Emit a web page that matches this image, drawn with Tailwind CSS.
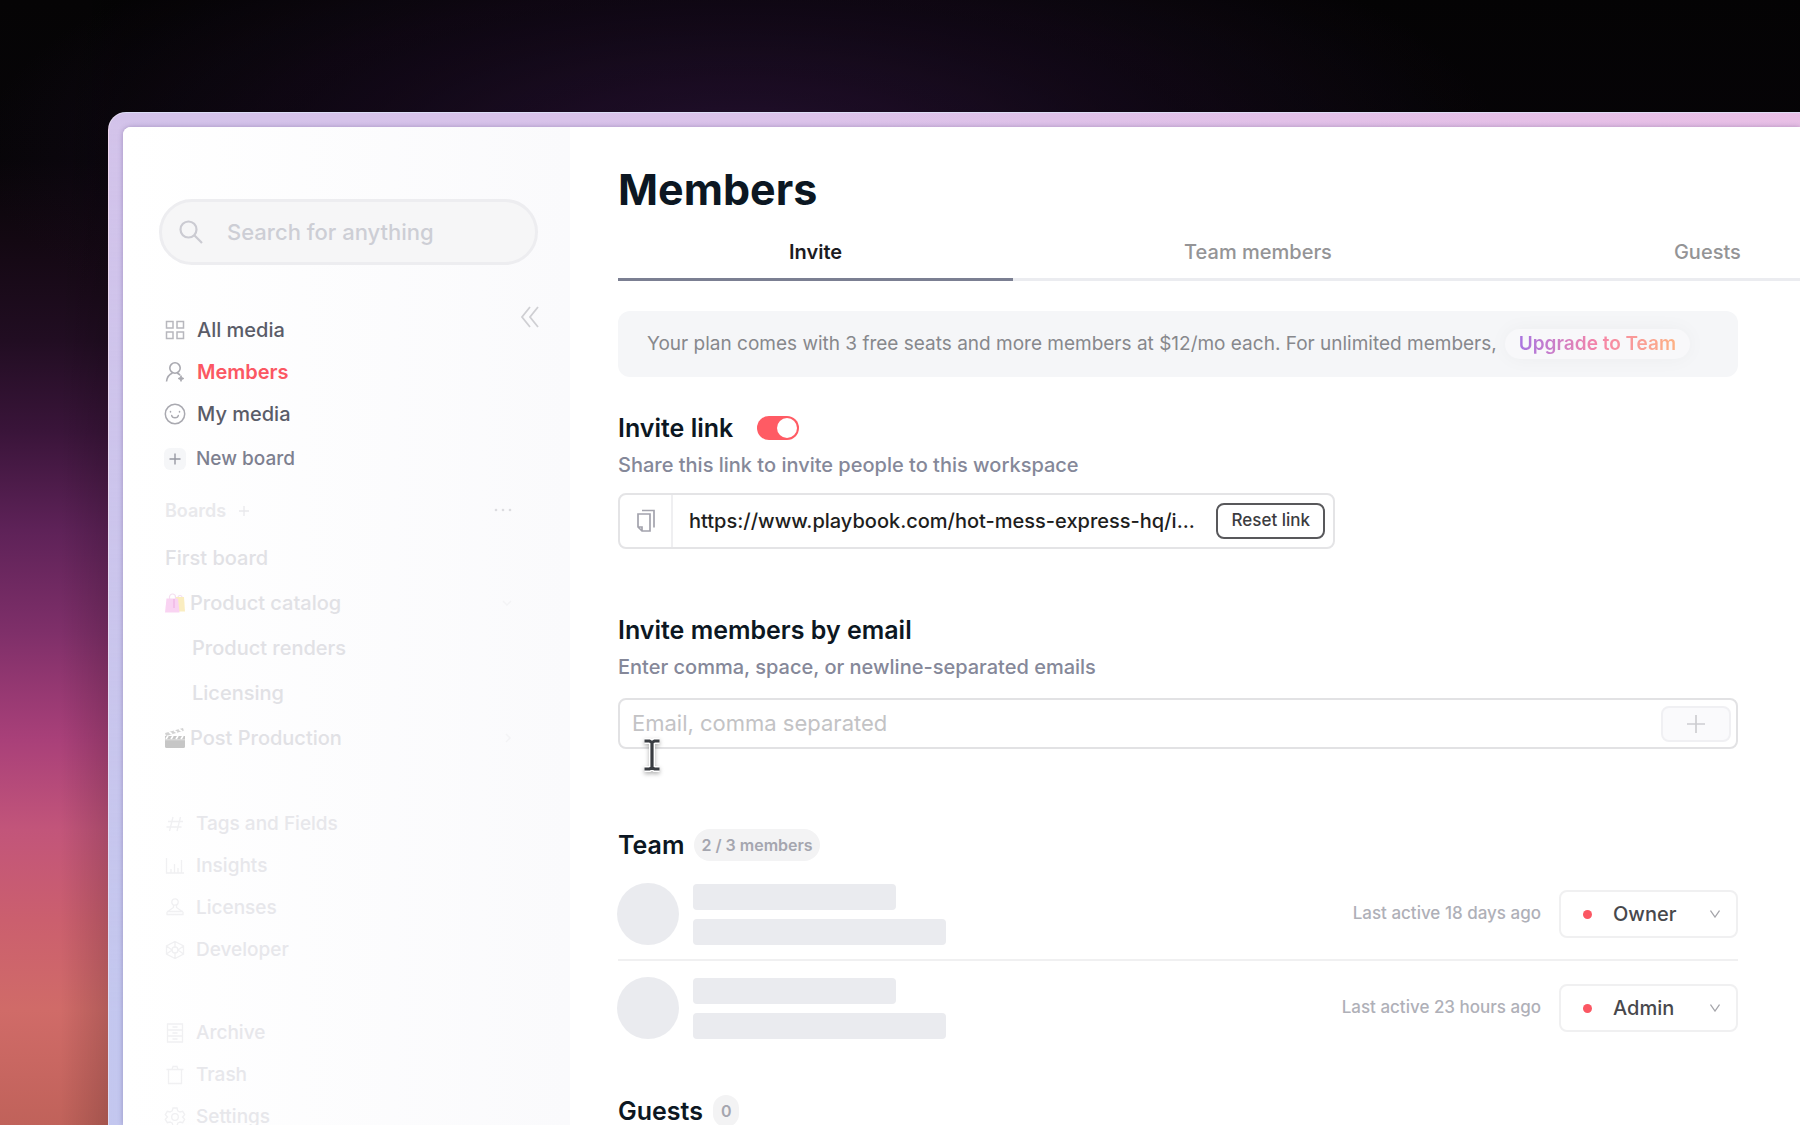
<!DOCTYPE html>
<html lang="en">
<head>
    <meta charset="UTF-8">
    <meta name="viewport" content="width=device-width, initial-scale=1.0">
    <title>Members</title>
    <script src="https://cdn.jsdelivr.net/npm/@tailwindcss/browser@4"></script>
    <style>
        body {
            font-family: 'Inter', 'Liberation Sans', sans-serif;
            background:
                linear-gradient(to right, transparent 60px, rgba(0, 0, 0, 0.2) 125px),
                radial-gradient(760px 260px at 740px 150px, #2b1338 0%, rgba(30, 13, 40, 0.65) 50%, transparent 100%),
                linear-gradient(to bottom, #050405 0, #070508 160px, #130812 240px, #210d22 340px, #391439 430px, #5e2258 530px, #7e2f69 630px, #a94079 740px, #c2557a 830px, #cb5f6e 920px, #d06b68 1010px, #c0625a 1125px);
        }
    </style>
</head>
<body class="h-screen overflow-hidden pl-[108px] pt-28">
    <!-- App window, runs off the right and bottom edges -->
    <div class="h-full rounded-tl-[18px] border-l border-t border-white/40 bg-[linear-gradient(to_bottom,rgba(190,200,240,0)_0,rgba(190,200,240,0.75)_900px),linear-gradient(to_right,#d3c3ea_0,#dcc3ea_700px,#e9bfe6_1700px)] pl-3.5 pt-3.5">
        <div class="flex h-full overflow-hidden rounded-tl-lg bg-white shadow-[0_0_5px_rgba(70,50,110,0.35)]">

            <!-- Sidebar -->
            <aside class="w-[447px] shrink-0 bg-linear-to-r from-white to-[#fafafc] pl-9 pr-8 pt-[72px]">
                <label class="flex h-[66px] items-center gap-6 rounded-full border-3 border-[#ededf0] bg-[#f6f6f7] pl-[17px] pr-6">
                    <svg class="size-6 shrink-0 text-[#cbcbd2]" viewBox="0 0 24 24" fill="none" stroke="currentColor" stroke-width="2.200">
                        <circle cx="9.500" cy="9.500" r="8" />
                        <path d="M15.300 15.300 23 23" />
                    </svg>
                    <input type="search" aria-label="Search" placeholder="Search for anything" class="w-full min-w-0 bg-transparent text-[22px] font-medium outline-none placeholder:text-[#cdced5]">
                </label>

                <div class="-mr-0.5 mt-10 flex justify-end">
                    <button type="button" aria-label="Collapse sidebar" class="text-[#cfcfd3]">
                        <svg class="h-6 w-5" viewBox="0 0 20 24" fill="none" stroke="currentColor" stroke-width="1.800">
                            <path d="M10 2 2 12l8 10M18 2l-8 10 8 10" />
                        </svg>
                    </button>
                </div>

                <nav class="-mt-5 ml-[5px] flex flex-col text-xl font-medium text-[#5a5c68]">
                    <a href="#" class="flex h-[42px] items-center gap-[11px]">
                        <svg class="size-[22px] text-[#b7b7bd]" viewBox="0 0 22 22" fill="none" stroke="currentColor" stroke-width="1.500">
                            <path d="M2.500 2.500h6.500v6.500h-6.500zM13 2.500h6.500v6.500h-6.500zM2.500 13h6.500v6.500h-6.500zM13 13h6.500v6.500h-6.500z" />
                        </svg>
                        All media
                    </a>
                    <a href="#" class="flex h-[42px] items-center gap-[11px] font-semibold text-[#fb5763]">
                        <svg class="size-[22px] text-[#a9a9b0]" viewBox="0 0 22 22" fill="none" stroke="currentColor" stroke-width="1.600">
                            <circle cx="11" cy="7" r="5.200" />
                            <path d="M2.500 20.500c.5-4.300 3-7.300 6-8.500M13 12c1.300.5 2.400 1.300 3.200 2.400" />
                            <path d="m17 14.500.9 2.100 2.100.9-2.100.9-.9 2.100-.9-2.100-2.100-.9 2.100-.9z" fill="currentColor" stroke-width="0.800" />
                        </svg>
                        Members
                    </a>
                    <a href="#" class="flex h-[42px] items-center gap-[11px]">
                        <svg class="size-[22px] text-[#a9a9b0]" viewBox="0 0 22 22" fill="none" stroke="currentColor" stroke-width="1.500">
                            <circle cx="11" cy="11" r="9.700" />
                            <path d="M7.700 12.500c.5 3 6.100 3 6.600 0M6.500 8.500v.6M15.500 8.500v.6" stroke-linecap="round" />
                        </svg>
                        My media
                    </a>
                    <a href="#" class="mt-[3px] flex h-[42px] items-center gap-2.5 text-[19px] text-[#7d8090]">
                        <svg class="size-[22px] rounded-md bg-[#f5f6f8] text-[#9799a3]" viewBox="0 0 22 22" fill="none" stroke="currentColor" stroke-width="1.400">
                            <path d="M11 5.500v11M5.500 11h11" />
                        </svg>
                        New board
                    </a>
                </nav>

                <!-- Boards -->
                <div class="ml-1.5 mt-[18px] flex h-[26px] items-center pr-[26px] text-[#e9e9ec]">
                    <h2 class="text-lg font-semibold">Boards</h2>
                    <button type="button" aria-label="Add board" class="ml-3">
                        <svg class="size-3" viewBox="0 0 12 12" fill="none" stroke="currentColor" stroke-width="1.300"><path d="M6 1v10M1 6h10" /></svg>
                    </button>
                    <button type="button" aria-label="Board options" class="ml-auto text-[#dcdce0]">
                        <svg class="h-3 w-[18px]" viewBox="0 0 18 12" fill="currentColor"><circle cx="2" cy="5" r="1.300" /><circle cx="9" cy="5" r="1.300" /><circle cx="16" cy="5" r="1.300" /></svg>
                    </button>
                </div>
                <ul class="ml-1.5 mt-[11px] flex flex-col pr-[26px] text-xl font-medium text-[#e1e1e5]">
                    <li class="flex h-[45px] items-center"><a href="#">First board</a></li>
                    <li class="flex h-[45px] items-center gap-[5px]">
                        <svg class="size-5" viewBox="0 0 20 20">
                            <path d="M13 7V4.500a2 2 0 0 1 4 0V7M4.500 6V4a3 3 0 0 1 6 0v2" fill="none" stroke="#f4dff0" stroke-width="1.200" />
                            <path d="M11 4h8l1 14.500h-8z" fill="#faedc0" />
                            <path d="M1.500 5.500h11.500l1.500 14H0z" fill="#f9d3f2" />
                            <path d="M9 6v9" stroke="#f0b8e6" stroke-width="1.500" />
                        </svg>
                        <a href="#">Product catalog</a>
                        <svg class="ml-auto h-2 w-2.5 text-[#f3f3f5]" viewBox="0 0 10 8" fill="none" stroke="currentColor" stroke-width="1.500"><path d="m1 2 4 4 4-4" /></svg>
                    </li>
                    <li class="flex h-[45px] items-center pl-[27px]"><a href="#">Product renders</a></li>
                    <li class="flex h-[45px] items-center pl-[27px]"><a href="#">Licensing</a></li>
                    <li class="flex h-[45px] items-center gap-[5px]">
                        <svg class="size-5" viewBox="0 0 20 20">
                            <path d="M0 8h20v10.500q0 1.500-1.500 1.500h-17Q0 20 0 18.500z" fill="#c6c6c6" />
                            <path d="m0 5 18-5 .8 2.800L1 8z" fill="#d2d2d2" />
                            <path d="m4 4 3 2M9 2.500l3 2M14 1.200l3 2M3 8l-2 3M8 8l-2 3M13 8l-2 3M18 8l-2 3" stroke="#fff" stroke-width="1.700" />
                            <path d="M0 11.800h20" stroke="#e2e2e2" />
                        </svg>
                        <a href="#">Post Production</a>
                        <svg class="ml-auto h-2.5 w-2 text-[#f3f3f5]" viewBox="0 0 8 10" fill="none" stroke="currentColor" stroke-width="1.500"><path d="m2 1 4 4-4 4" /></svg>
                    </li>
                </ul>

                <nav class="ml-[5px] mt-[43px] flex flex-col text-[19px] font-medium text-[#e7e7eb]">
                    <a href="#" class="flex h-[42px] items-center gap-2.5">
                        <svg class="size-[22px] text-[#f0f0f2]" viewBox="0 0 22 22" fill="none" stroke="currentColor" stroke-width="1.300"><path d="M9 4 5.500 18M16.500 4 13 18M4 8.500h15M2.500 14h15" /></svg>
                        Tags and Fields
                    </a>
                    <a href="#" class="flex h-[42px] items-center gap-2.5">
                        <svg class="size-[22px] text-[#f0f0f2]" viewBox="0 0 22 22" fill="none" stroke="currentColor" stroke-width="1.300"><path d="M2.500 3v15H20M7 18v-4M10.500 18V9M14 18v-5M17.500 18V5" /></svg>
                        Insights
                    </a>
                    <a href="#" class="flex h-[42px] items-center gap-2.5">
                        <svg class="size-[22px] text-[#f0f0f2]" viewBox="0 0 22 22" fill="none" stroke="currentColor" stroke-width="1.300"><circle cx="11" cy="5" r="3.200" /><path d="M9.500 8v2.500L3 15v2.500h16V15l-6.500-4.500V8M3 14.500h16" /></svg>
                        Licenses
                    </a>
                    <a href="#" class="flex h-[42px] items-center gap-2.5">
                        <svg class="size-[22px] text-[#f0f0f2]" viewBox="0 0 22 22" fill="none" stroke="currentColor" stroke-width="1.300"><path d="m11 2.500 8.500 4.500v8L11 19.500 2.500 15V7zM11 2.500V8M11 14v5.500M2.500 7 8 11l-5.500 4M19.500 7 14 11l5.500 4" /><circle cx="11" cy="11" r="3" /></svg>
                        Developer
                    </a>
                    <a href="#" class="mt-[41px] flex h-[42px] items-center gap-2.5">
                        <svg class="size-[22px] text-[#f0f0f2]" viewBox="0 0 22 22" fill="none" stroke="currentColor" stroke-width="1.300"><path d="M3.500 2h15v18h-15zM3.500 8h15M3.500 14h15M8.500 5h5M8.500 11h5M8.500 17h5" /></svg>
                        Archive
                    </a>
                    <a href="#" class="flex h-[42px] items-center gap-2.5">
                        <svg class="size-[22px] text-[#f0f0f2]" viewBox="0 0 22 22" fill="none" stroke="currentColor" stroke-width="1.300"><path d="M2.500 5.500h17M4.500 5.500V19.500h13V5.500M8 5.500 9 2.500h4l1 3" /></svg>
                        Trash
                    </a>
                    <a href="#" class="flex h-[42px] items-center gap-2.5">
                        <svg class="size-[22px] text-[#f0f0f2]" viewBox="0 0 22 22" fill="none" stroke="currentColor" stroke-width="1.300"><path d="M9 2h4l.7 2.700 2.300 1.300 2.700-.7 2 3.400L18.500 11l2.200 2.300-2 3.400-2.700-.7-2.300 1.300L13 20H9l-.7-2.700L6 16l-2.700.7-2-3.400L3.500 11 1.300 8.700l2-3.400L6 6l2.300-1.300z" /><circle cx="11" cy="11" r="3.300" /></svg>
                        Settings
                    </a>
                </nav>
            </aside>

            <!-- Members page -->
            <main class="min-w-0 flex-1 pl-12 pr-[62px] pt-9 text-xl font-medium text-[#0c1722]">
                <h1 class="text-[43px]/[52px] font-bold">Members</h1>

                <div class="-mr-[62px] overflow-hidden">
                    <div role="tablist" class="flex w-max text-[#949496]">
                        <button type="button" role="tab" aria-selected="true" class="border-b-3 border-[#7b7f92] px-[171px] pb-3.5 pt-[25px] text-xl/6 font-semibold text-[#1c1c1f]">Invite</button>
                        <button type="button" role="tab" class="border-b-3 border-[#ebecf0] px-[171px] pb-3.5 pt-[25px] text-xl/6">Team members</button>
                        <button type="button" role="tab" class="border-b-3 border-[#ebecf0] px-[171px] pb-3.5 pt-[25px] text-xl/6">Guests</button>
                    </div>
                </div>

                <div class="mt-[30px] flex h-[66px] items-center gap-2 rounded-xl bg-[#f5f6f8] pl-[29px] text-[19px] whitespace-nowrap text-[#87888c]">
                    <p class="font-normal">Your plan comes with 3 free seats and more members at $12/mo each. For unlimited members,</p>
                    <a href="#" class="rounded-full bg-[#f8f8fa] px-3.5 py-0.5 font-semibold shadow-[0_0_20px_rgba(0,0,0,0.04)]">
                        <span class="bg-linear-to-r from-[#a974e0] via-[#f584a8] to-[#fdb183] bg-clip-text text-transparent">Upgrade to Team</span>
                    </a>
                </div>

                <section class="mt-[35px]">
                    <div class="flex h-8 items-center gap-6">
                        <h2 id="invite-link" class="text-[25px] font-semibold">Invite link</h2>
                        <label class="flex h-6 w-[42px] rounded-full bg-[#ff5b64] p-0.5">
                            <input type="checkbox" checked aria-labelledby="invite-link" class="peer sr-only">
                            <span class="size-5 rounded-full bg-white peer-checked:ml-auto"></span>
                        </label>
                    </div>
                    <p class="mt-[7px] text-[#858899]">Share this link to invite people to this workspace</p>
                    <div class="mt-3.5 flex h-14 w-[717px] items-center rounded-lg border-2 border-[#e4e4e6] pr-2">
                        <button type="button" aria-label="Copy link" class="flex h-full w-[53px] items-center justify-center border-r-2 border-[#efeff1] text-[#a3a3ad]">
                            <svg class="h-6 w-5" viewBox="0 0 20 24" fill="none" stroke="currentColor" stroke-width="1.700">
                                <path d="M6 1.500h12v17M14 5v17H6L2 18V5zM2 18h4v4" />
                            </svg>
                        </button>
                        <input type="text" readonly aria-label="Invite link" value="https://www.playbook.com/hot-mess-express-hq/i..." class="ml-4 min-w-0 flex-1 bg-transparent text-[#1e1e20] outline-none">
                        <button type="button" class="h-9 rounded-lg border-2 border-[#58585b] px-[13px] text-[17px] text-[#3c3c3f]">Reset link</button>
                    </div>
                </section>

                <section class="relative mt-[65px]">
                    <h2 class="text-[25px]/8 font-semibold"><label for="emails">Invite members by email</label></h2>
                    <p class="mt-[7px] text-[#858899]">Enter comma, space, or newline-separated emails</p>
                    <div class="mt-[17px] flex h-[51px] items-center rounded-lg border-2 border-[#e2e2e4] pl-3 pr-[5px]">
                        <input id="emails" type="text" placeholder="Email, comma separated" class="min-w-0 flex-1 bg-transparent text-[22px] font-normal outline-none placeholder:text-[#c3c3c5]">
                        <button type="button" aria-label="Add emails" class="flex h-9 w-[70px] items-center justify-center rounded-lg border-2 border-[#f0f0f3] bg-[#fafafc] text-[#cdcdd1]">
                            <svg class="size-5" viewBox="0 0 20 20" fill="none" stroke="currentColor" stroke-width="1.700"><path d="M10 1v18M1 10h18" /></svg>
                        </button>
                    </div>
                    <!-- Text cursor hovering the field -->
                    <svg class="absolute left-6 top-[123px] h-9 w-5 drop-shadow-[0_2px_2px_rgba(0,0,0,0.3)]" viewBox="0 0 20 36" fill="none">
                        <path d="M2.500 4h5L10 5.500 12.500 4h5M2.500 32h5l2.500-1.500 2.500 1.500h5M10 5v26" stroke="#fff" stroke-width="6" />
                        <path d="M2.500 4h5L10 5.500 12.500 4h5M2.500 32h5l2.500-1.500 2.500 1.500h5M10 5v26" stroke="#3a3d42" stroke-width="3.200" />
                    </svg>
                </section>

                <section class="mt-20">
                    <div class="flex h-8 items-center gap-2.5">
                        <h2 class="text-[25px] font-semibold">Team</h2>
                        <span class="rounded-full bg-[#f3f3f4] px-[7px] text-base/8 font-semibold text-[#a5a6af]">2 / 3 members</span>
                    </div>
                    <ul>
                        <li class="flex h-[100px] items-center gap-[14px] border-b-2 border-[#f0f0f1] pt-2">
                            <div class="-ml-px size-[62px] rounded-full bg-[#eaebef]"></div>
                            <div class="flex flex-col gap-[9px]">
                                <div class="h-[26px] w-[203px] rounded bg-[#eaebef]"></div>
                                <div class="h-[26px] w-[253px] rounded bg-[#eaebef]"></div>
                            </div>
                            <span class="ml-auto text-[17px] text-[#afb0b8]">Last active 18 days ago</span>
                            <div class="relative ml-1">
                                <select aria-label="Role of first member" class="h-12 w-[179px] appearance-none rounded-lg border-2 border-[#f0f0f1] bg-white pl-13 text-xl text-[#48484c]">
                                    <option>Owner</option>
                                    <option>Admin</option>
                                </select>
                                <span class="pointer-events-none absolute left-6 top-5 size-[9px] rounded-full bg-[#fb5763]"></span>
                                <svg class="pointer-events-none absolute right-[18px] top-5 h-2 w-2.5 text-[#a5a5aa]" viewBox="0 0 10 8" fill="none" stroke="currentColor" stroke-width="1.300"><path d="m.5.5 4.500 6.500L9.500.5" /></svg>
                            </div>
                        </li>
                        <li class="flex h-[94px] items-center gap-[14px]">
                            <div class="-ml-px size-[62px] rounded-full bg-[#eaebef]"></div>
                            <div class="flex flex-col gap-[9px]">
                                <div class="h-[26px] w-[203px] rounded bg-[#eaebef]"></div>
                                <div class="h-[26px] w-[253px] rounded bg-[#eaebef]"></div>
                            </div>
                            <span class="ml-auto text-[17px] text-[#afb0b8]">Last active 23 hours ago</span>
                            <div class="relative ml-1">
                                <select aria-label="Role of second member" class="h-12 w-[179px] appearance-none rounded-lg border-2 border-[#f0f0f1] bg-white pl-13 text-xl text-[#48484c]">
                                    <option>Admin</option>
                                    <option>Owner</option>
                                </select>
                                <span class="pointer-events-none absolute left-6 top-5 size-[9px] rounded-full bg-[#fb5763]"></span>
                                <svg class="pointer-events-none absolute right-[18px] top-5 h-2 w-2.5 text-[#a5a5aa]" viewBox="0 0 10 8" fill="none" stroke="currentColor" stroke-width="1.300"><path d="m.5.5 4.500 6.500L9.500.5" /></svg>
                            </div>
                        </li>
                    </ul>
                </section>

                <section class="mt-10">
                    <div class="flex h-8 items-center gap-2.5">
                        <h2 class="text-[25px] font-semibold">Guests</h2>
                        <span class="rounded-full bg-[#f3f3f4] px-2 text-base/8 font-semibold text-[#a5a6af]">0</span>
                    </div>
                </section>
            </main>
        </div>
    </div>
</body>
</html>
